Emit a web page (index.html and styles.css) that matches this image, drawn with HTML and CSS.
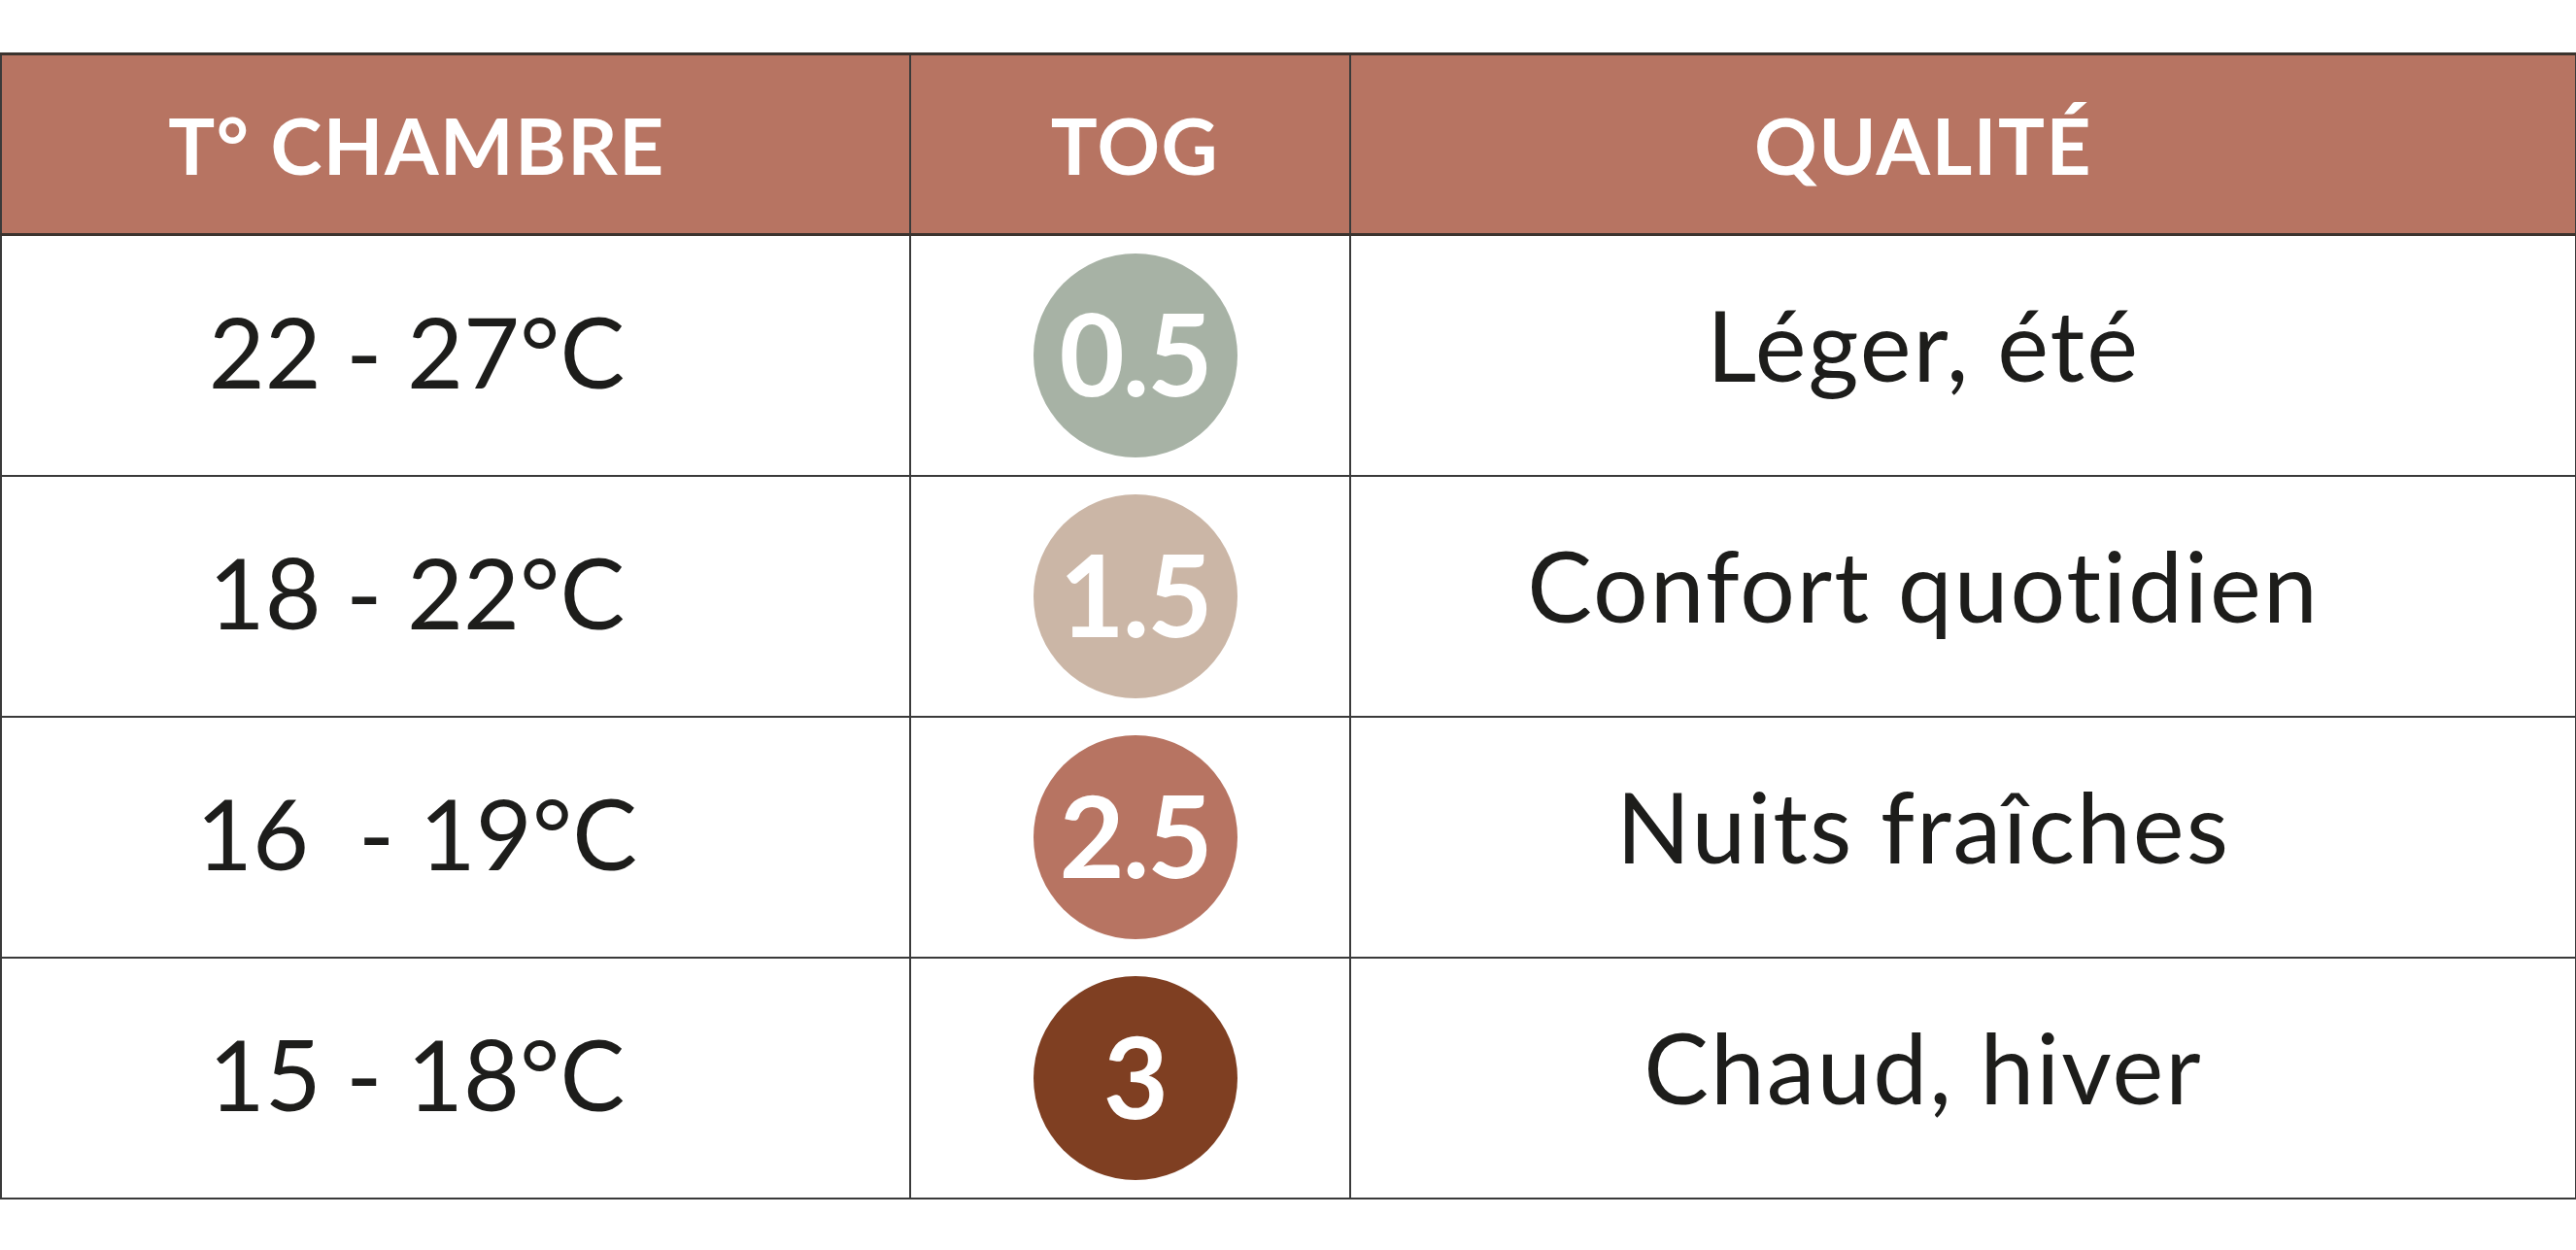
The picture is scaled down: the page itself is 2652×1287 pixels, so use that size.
FILE: index.html
```html
<!DOCTYPE html>
<html lang="fr">
<head>
<meta charset="utf-8">
<title>TOG</title>
<link rel="stylesheet" href="styles.css">
</head>
<body>
<table class="tog-table">
  <colgroup>
    <col class="c1">
    <col class="c2">
    <col class="c3">
  </colgroup>
  <thead>
    <tr>
      <th class="temp">T° CHAMBRE</th>
      <th class="tog">TOG</th>
      <th class="qual">QUALITÉ</th>
    </tr>
  </thead>
  <tbody>
    <tr>
      <td class="temp">22 - 27°C</td>
      <td class="tog"><span class="dot dot-05">0.5</span></td>
      <td class="qual">Léger, été</td>
    </tr>
    <tr>
      <td class="temp">18 - 22°C</td>
      <td class="tog"><span class="dot dot-15">1.5</span></td>
      <td class="qual">Confort quotidien</td>
    </tr>
    <tr>
      <td class="temp">16&nbsp; - 19°C</td>
      <td class="tog"><span class="dot dot-25">2.5</span></td>
      <td class="qual">Nuits fraîches</td>
    </tr>
    <tr>
      <td class="temp">15 - 18°C</td>
      <td class="tog"><span class="dot dot-3">3</span></td>
      <td class="qual">Chaud, hiver</td>
    </tr>
  </tbody>
</table>
</body>
</html>
```

FILE: styles.css
```css
html, body {
  margin: 0;
  padding: 0;
  background: #ffffff;
}

body {
  padding-top: 54px;
  font-family: Lato, "Liberation Sans", sans-serif;
  font-variant-ligatures: none;
  color: #1d1d1b;
}

.tog-table {
  width: 2651px;
  border-collapse: collapse;
  table-layout: fixed;
}

.c1 { width: 936px; }
.c2 { width: 453px; }
.c3 { width: 1262px; }

.tog-table th,
.tog-table td {
  border: 2px solid #3a3a3a;
  text-align: center;
  vertical-align: middle;
  padding: 0;
}

.tog-table thead th {
  background: #b77462;
  color: #ffffff;
  height: 183px;
  font-weight: 700;
  font-size: 80px;
  letter-spacing: 1.5px;
  border-top: 3px solid #3b332e;
  border-bottom: 3px solid #3b332e;
}

.tog-table tbody td {
  height: 246px;
  font-size: 100px;
  font-weight: 400;
}

.tog-table .temp { padding-right: 80px; }
.tog-table .qual { padding-right: 82px; }
.tog-table .tog { padding-left: 10px; }

.tog-table tbody td.temp {
  height: 236px;
  padding-bottom: 10px;
}

.tog-table tbody td.qual {
  letter-spacing: 2px;
  height: 222px;
  padding-bottom: 24px;
}

.dot {
  display: inline-flex;
  align-items: center;
  justify-content: center;
  box-sizing: border-box;
  width: 210px;
  height: 210px;
  padding-bottom: 6px;
  border-radius: 50%;
  color: #ffffff;
  font-weight: 700;
  font-size: 116px;
  letter-spacing: -2px;
  vertical-align: middle;
}

.dot-05 { background: #a7b2a5; }
.dot-15 { background: #cbb6a6; }
.dot-25 { background: #b77462; }
.dot-3  { background: #7f3f22; }
```
